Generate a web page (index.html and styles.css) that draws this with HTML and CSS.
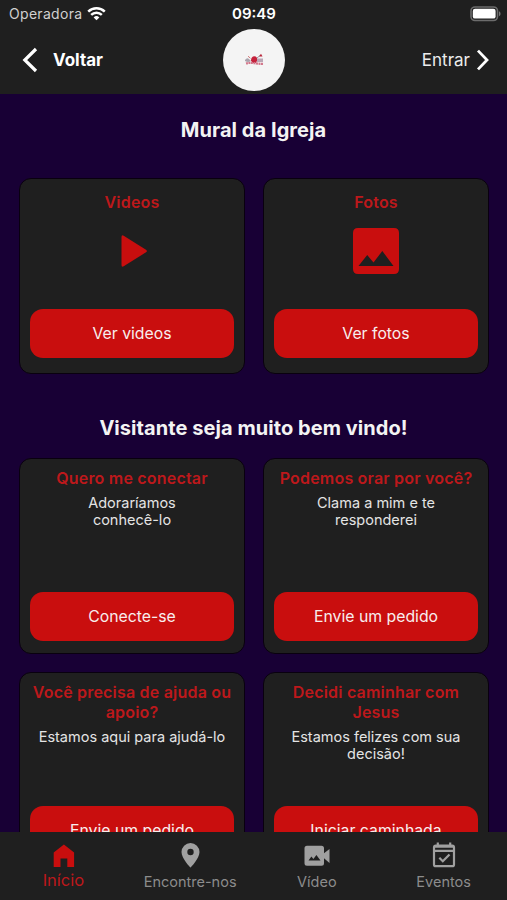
FILE: index.html
```
<!DOCTYPE html>
<html lang="pt-BR">
<head>
<meta charset="utf-8">
<title>Mural da Igreja</title>
<link rel="stylesheet" href="styles.css">
</head>
<body>
<div class="app">
  <header class="top">
    <div class="status">
      <div class="carrier"><span>Operadora</span>
        <svg class="wifi" viewBox="0 0 20 15" width="19" height="15"><g fill="none" stroke="#fff" stroke-width="2.6"><path d="M1.3 5.6a12.4 12.4 0 0 1 17.4 0"/><path d="M4.4 9a8 8 0 0 1 11.2 0"/></g><path d="M10 14.6l-3-3a4.3 4.3 0 0 1 6 0z" fill="#fff"/></svg>
      </div>
      <span class="clock">09:49</span>
      <div class="power">
        <svg viewBox="0 0 31 16" width="31" height="16"><rect x="1" y="1" width="26.5" height="13.5" rx="4" fill="#1f1f1f" stroke="#6c6c6c" stroke-width="1.6"/><rect x="2.8" y="2.8" width="22.8" height="9.8" rx="2.2" fill="#fff"/><path d="M29 5.3c2 .8 2 4.2 0 5z" fill="#777"/></svg>
      </div>
    </div>
    <nav class="bar">
      <a class="back"><svg viewBox="0 0 16 26" width="16" height="26"><path d="M14 2 2.8 13 14 24" fill="none" stroke="#fff" stroke-width="3.2"/></svg><span>Voltar</span></a>
      <div class="logo">
        <svg viewBox="0 0 20 14" width="20" height="14"><path d="M1 7q2-3 4-1l2 2q-3 2-6 0z" fill="#aaa3ad"/><path d="M4 3.2l2.4 2" stroke="#c66" stroke-width=".9"/><path d="M7 7.500q0-4 3.500-4.200 3.200.3 2.600 4.200L12 10H8.500z" fill="#c5223c"/><path d="M13 5.5h6v3.500h-6z" fill="#b9a7b6"/><path d="M13 5l3-2.5" stroke="#9b8595" stroke-width=".9"/><path d="M15 3.500 17 .8l1.500 2.700z" fill="#b9273c"/><path d="M2 10.4q4-.9 8.5-.2t9 .6" fill="none" stroke="#d2778b" stroke-width="2.2" stroke-dasharray="2 .5"/></svg>
      </div>
      <a class="enter"><span>Entrar</span><svg viewBox="0 0 14 22" width="14" height="22"><path d="M2 1.6 11 11l-9 9.4" fill="none" stroke="#fff" stroke-width="2.8"/></svg></a>
    </nav>
  </header>

  <main class="content">
    <h1 class="title">Mural da Igreja</h1>
    <section class="grid media">
      <article class="card">
        <h2>Videos</h2>
        <svg class="art" viewBox="0 0 62 62" width="62" height="62"><path d="M20.5 17v28q0 2.500 2.200 1.300l22.300-14q1.800-1.300 0-2.600l-22.300-14q-2.200-1.200-2.200 1.300z" fill="#c90e0e"/></svg>
        <a class="button">Ver videos</a>
      </article>
      <article class="card">
        <h2>Fotos</h2>
        <svg class="art" viewBox="0 0 62 62" width="62" height="62"><path fill="#c90e0e" fill-rule="evenodd" d="M13 8h36q5 0 5 5v36q0 5-5 5H13q-5 0-5-5V13q0-5 5-5zM13.500 46h35L37.300 31 28.500 42.500 22.200 35z"/></svg>
        <a class="button">Ver fotos</a>
      </article>
    </section>
    <h1 class="title">Visitante seja muito bem vindo!</h1>
    <section class="grid visitor">
      <article class="card"><h2>Quero me conectar</h2><p>Adoraríamos<br>conhecê-lo</p><a class="button">Conecte-se</a></article>
      <article class="card"><h2>Podemos orar por você?</h2><p>Clama a mim e te<br>responderei</p><a class="button">Envie um pedido</a></article>
      <article class="card"><h2>Você precisa de ajuda ou<br>apoio?</h2><p>Estamos aqui para ajudá-lo</p><a class="button">Envie um pedido</a></article>
      <article class="card"><h2>Decidi caminhar com<br>Jesus</h2><p>Estamos felizes com sua<br>decisão!</p><a class="button">Iniciar caminhada</a></article>
    </section>
  </main>

  <nav class="tabs">
    <a class="tab active"><svg viewBox="0 0 26 28" width="26" height="28"><path fill="currentColor" d="M3.700 10.500 13.900 2.500l10.200 8V25h-6.800V16.500h-6.800V25H3.700z"/></svg><span>Início</span></a>
    <a class="tab"><svg viewBox="0 0 26 28" width="26" height="28"><path fill="currentColor" fill-rule="evenodd" d="M13.500 1a9 9 0 0 0-9 9c0 6.500 9 15.600 9 15.600s9-9.100 9-15.600a9 9 0 0 0-9-9zm0 5.800a3.200 3.200 0 1 1 0 6.400 3.200 3.200 0 0 1 0-6.400z"/></svg><span>Encontre-nos</span></a>
    <a class="tab"><svg viewBox="0 0 26 28" width="26" height="28"><path fill="currentColor" fill-rule="evenodd" d="M3 3.800h14.500q2.500 0 2.500 2.500v5L25.500 7v14L20 16.300v5q0 2.500-2.500 2.500H3q-2.500 0-2.500-2.500v-15Q.5 3.800 3 3.800zM4.500 18.500h12l-4.100-5.500-3 4-2-2.600z"/></svg><span>Vídeo</span></a>
    <a class="tab"><svg viewBox="0 0 26 28" width="26" height="28"><g fill="none" stroke="currentColor" stroke-width="2.2"><rect x="3" y="3.700" width="20" height="20.500" rx="1.800"/><path d="M3 4.600h20M3 8.800h20M6.800.5v4M19.200.5v4M8.300 15.800l3.500 3.500 6.700-6.800"/></g></svg><span>Eventos</span></a>
  </nav>
</div>
</body>
</html>
```
FILE: styles.css
```
* { box-sizing: border-box; }
body { margin: 0; background: #180035; color: #f3f3f3; font-family: Inter, "Liberation Sans", sans-serif; }
h1, h2, p { margin: 0; }
svg { display: block; flex: none; }
.app { width: 507px; height: 900px; display: flex; flex-direction: column; overflow: hidden; }
.top { flex: none; height: 94px; background: #1f1f1f; }
.status { height: 27px; padding: 0 6px 0 9px; display: grid; grid-template-columns: 1fr auto 1fr; align-items: center; }
.carrier { display: flex; align-items: center; gap: 5px; font-size: 14px; color: #d0d0d0; letter-spacing: .3px; }
.clock { font-size: 15px; font-weight: 600; color: #fff; margin-right: 2px; }
.power { display: flex; justify-content: flex-end; }
.bar { height: 67px; padding: 0 17px 2px 22px; display: grid; grid-template-columns: 1fr auto 1fr; align-items: center; }
.back { display: flex; align-items: center; gap: 15px; font-size: 17px; font-weight: 700; color: #fff; }
.logo { width: 62px; height: 62px; margin: 0 5px 0 0; border-radius: 50%; background: #f4f4f4; display: flex; align-items: center; justify-content: center; }
.enter { display: flex; align-items: center; justify-content: flex-end; gap: 6px; font-size: 17px; color: #ececec; }
.content { flex: 1; min-height: 0; overflow: hidden; padding: 0 19px; }
.title { font-size: 20px; line-height: 24px; font-weight: 650; text-align: center; padding-top: 24px; letter-spacing: .06px; }
.grid { display: grid; grid-template-columns: 1fr 1fr; gap: 18px; padding-top: 18px; }
.media { padding: 36px 0 18px; }
.card { height: 196px; border: 1.5px solid #09000f; border-radius: 12px; background: #1f1f1f; padding: 9px 10px 15px; display: flex; flex-direction: column; align-items: center; text-align: center; }
.media .card { padding-top: 13px; }
.visitor .card { padding-bottom: 12px; }
.card h2 { font-size: 16px; line-height: 20px; font-weight: 600; color: #bd181b; letter-spacing: .2px; white-space: nowrap; }
.card p { margin-top: 6px; font-size: 14.5px; line-height: 17px; color: #e4e4e4; }
.art { margin-top: 8px; }
.button { margin-top: auto; width: 204px; height: 49px; padding-bottom: 1px; border-radius: 13px; background: #c90e0e; display: flex; align-items: center; justify-content: center; font-size: 15.8px; color: #f8eded; }
.tabs { flex: none; height: 68px; background: #1f1f1f; display: grid; grid-template-columns: repeat(4, 1fr); }
.tab { display: flex; flex-direction: column; align-items: center; padding-top: 10px; color: #a0a0a0; font-size: 14.5px; line-height: 20px; }
.tab span { margin-top: 2px; color: #8c8c8c; }
.active { color: #c90e0e; font-size: 16.5px; }
.active span { margin-top: 0; color: #bd181b; }
```
